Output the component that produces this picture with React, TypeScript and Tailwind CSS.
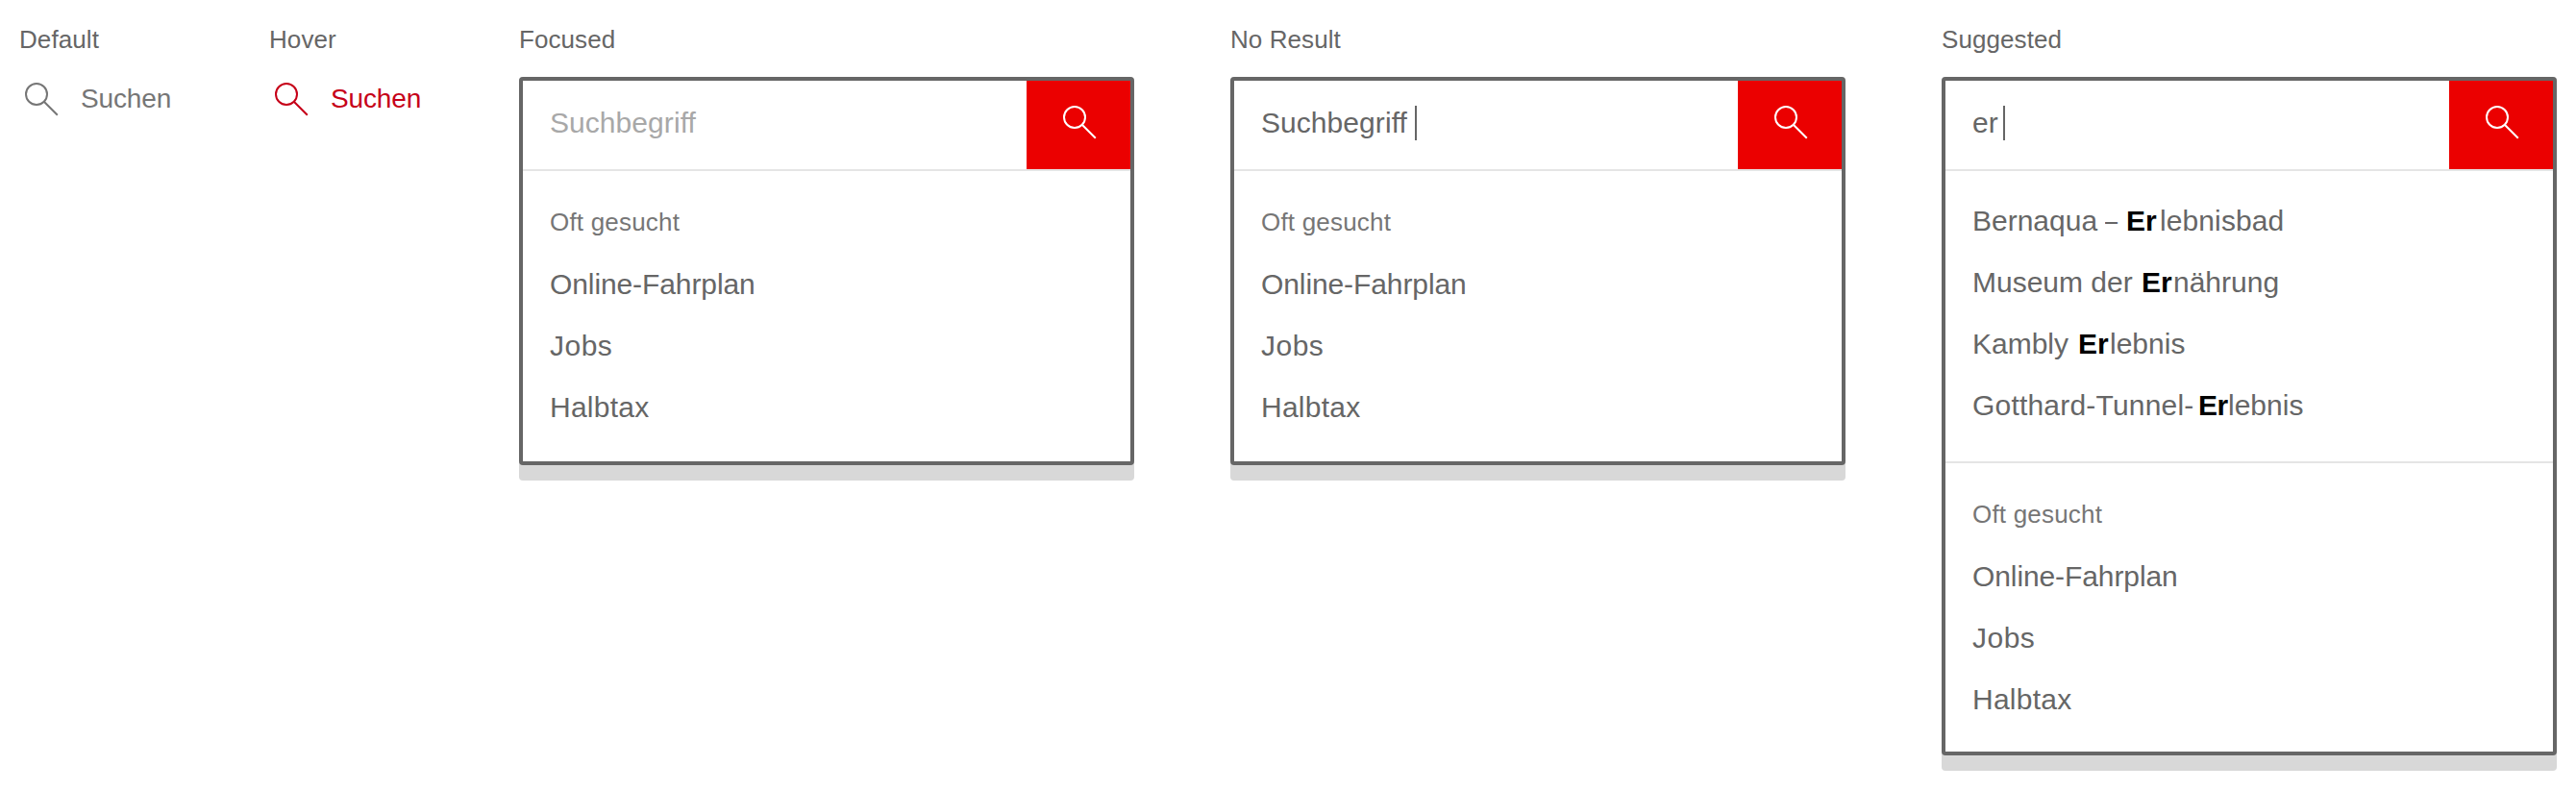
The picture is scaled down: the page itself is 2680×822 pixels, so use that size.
import type { ReactNode } from "react";

function SearchIcon() {
  return (
    <svg className="block h-12 w-12 shrink-0" viewBox="0 0 48 48" fill="none" stroke="currentColor" strokeWidth="2">
      <circle cx="20" cy="20" r="11" />
      <path d="M27.8 27.8 41.8 41.8" />
    </svg>
  );
}

function Column({ label, className, children }: { label: string; className: string; children: ReactNode }) {
  return (
    <section className={`flex shrink-0 flex-col items-start ${className}`}>
      <h2 className="h-20 pt-[25px] text-[26px] leading-8 tracking-[0.08px] text-[#666666]">{label}</h2>
      {children}
    </section>
  );
}

function SearchLink({ className }: { className: string }) {
  return (
    <a className={`-ml-0.5 -mt-0.5 flex items-start gap-[18px] ${className}`}>
      <SearchIcon />
      <span className="text-[28px] leading-[50px] tracking-[-0.15px]">Suchen</span>
    </a>
  );
}

function SearchBox({ field, children }: { field: ReactNode; children: ReactNode }) {
  return (
    <div className="w-full rounded-[4px] bg-[#d8d8d8] pb-4">
      <div className="rounded-[4px] border-4 border-[#666666] bg-white">
        <div className="flex h-[94px] border-b-2 border-[#e5e5e5]">
          <div className="flex h-[88px] flex-1 items-center pl-7 text-[30px] leading-[88px] tracking-[0.06px]">{field}</div>
          <button className="flex h-[92px] w-[108px] items-start justify-center bg-[#eb0000] pt-[18px] text-white">
            <SearchIcon />
          </button>
        </div>
        {children}
      </div>
    </div>
  );
}

function Cursor() {
  return <span className="h-9 w-0.5 bg-[#666666]" />;
}

function Popular({ className }: { className: string }) {
  return (
    <div className={`px-7 pt-[21px] text-[30px] leading-[64px] text-[#666666] ${className}`}>
      <h3 className="h-[65px] text-[26px] tracking-[0.2px] text-[#767676]">Oft gesucht</h3>
      <ul>
        <li className="tracking-[-0.1px]">Online-Fahrplan</li>
        <li className="tracking-[0.5px]">Jobs</li>
        <li className="tracking-[0.25px]">Halbtax</li>
      </ul>
    </div>
  );
}

const narrowDash = <span className="inline-block w-[13px] origin-left scale-x-[0.78]">–</span>;

const suggestions = [
  { before: <>Bernaqua {narrowDash} </>, after: "lebnisbad", lead: "w-[160px]", match: "w-[35px]", tail: "tracking-[0.1px]" },
  { before: "Museum der ", after: "nährung", lead: "w-[176px]", match: "w-[33px]", tail: "" },
  { before: "Kambly ", after: "lebnis", lead: "w-[110px]", match: "w-[33px]", tail: "" },
  { before: "Gotthard-Tunnel-", after: "lebnis", lead: "w-[235px] tracking-[0.2px]", match: "w-[31px] tracking-[-0.4px]", tail: "" },
];

function Suggestions() {
  return (
    <ul className="border-b-2 border-[#e5e5e5] px-7 pt-5 pb-[26px] text-[30px] leading-[64px] text-[#666666]">
      {suggestions.map((s) => (
        <li key={s.lead} className="flex h-16 whitespace-pre">
          <span className={`shrink-0 ${s.lead}`}>{s.before}</span>
          <b className={`shrink-0 font-bold text-black ${s.match}`}>Er</b>
          <span className={s.tail}>{s.after}</span>
        </li>
      ))}
    </ul>
  );
}

export default function App() {
  return (
    <main className="flex h-[822px] w-[2680px] items-start overflow-hidden bg-white pl-5 font-['Liberation_Sans',Arial,sans-serif]">
      <Column label="Default" className="w-[260px]">
        <SearchLink className="text-[#767676]" />
      </Column>
      <Column label="Hover" className="w-[260px]">
        <SearchLink className="text-[#c60018]" />
      </Column>
      <Column label="Focused" className="mr-[100px] w-[640px]">
        <SearchBox field={<span className="text-[#a8a8a8]">Suchbegriff</span>}>
          <Popular className="pb-6" />
        </SearchBox>
      </Column>
      <Column label="No Result" className="mr-[100px] w-[640px]">
        <SearchBox
          field={
            <>
              <span className="w-40 text-[#666666]">Suchbegriff</span>
              <Cursor />
            </>
          }
        >
          <Popular className="pb-6" />
        </SearchBox>
      </Column>
      <Column label="Suggested" className="w-[640px]">
        <SearchBox
          field={
            <>
              <span className="w-8 text-[#666666]">er</span>
              <Cursor />
            </>
          }
        >
          <Suggestions />
          <Popular className="pb-[22px]" />
        </SearchBox>
      </Column>
    </main>
  );
}
